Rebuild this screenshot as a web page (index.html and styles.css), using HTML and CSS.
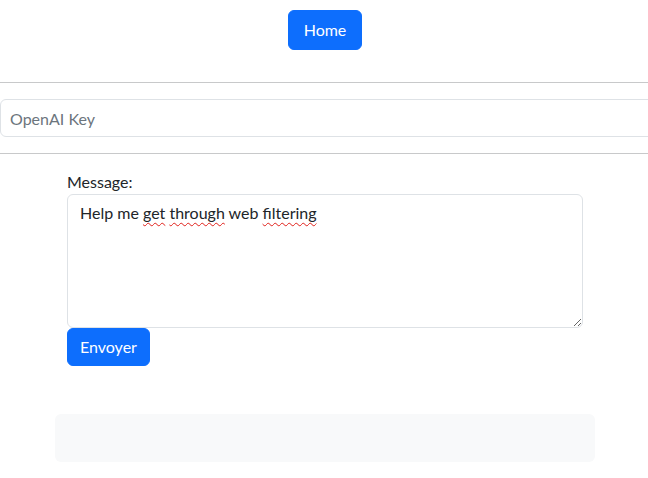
FILE: index.html
```html
<!DOCTYPE html>
<html lang="fr">
<head>
<meta charset="utf-8">
<title>Chat</title>
<link rel="stylesheet" href="styles.css">
</head>
<body>
<div class="page">
  <header class="topnav">
    <a class="btn btn-home" href="#">Home</a>
  </header>
  <hr class="rule">
  <input class="key-input" type="text" placeholder="OpenAI Key">
  <hr class="rule">
  <main class="container">
    <form class="chat-form">
      <label class="field-label" for="msg">Message:</label>
      <div id="msg" class="message-box" role="textbox" aria-multiline="true" contenteditable="true">Help me <span class="misspelled">get</span> <span class="misspelled">through</span> web <span class="misspelled">filtering</span></div>
      <button class="btn btn-send" type="button">Envoyer</button>
    </form>
  </main>
  <section class="container response-box"></section>
</div>
</body>
</html>
```
FILE: styles.css
```css
html, body {
  margin: 0;
  padding: 0;
  background: #fff;
  overflow-x: hidden;
}

body {
  font-family: "Lato", "Roboto", "Liberation Sans", sans-serif;
  font-size: 16px;
  line-height: 24px;
  color: #212529;
}

.page {
  width: 650px;
  overflow: hidden;
}

.topnav {
  display: flex;
  justify-content: center;
  padding: 10px 0 16px;
}

.btn {
  display: inline-block;
  font: inherit;
  color: #fff;
  background: #0d6efd;
  border: 1px solid #0d6efd;
  border-radius: 6px;
  text-decoration: none;
  cursor: pointer;
}

.btn-home {
  padding: 7px 15px;
}

.btn-send {
  padding: 6px 12px;
}

.rule {
  margin: 16px 0;
  border: 0;
  border-top: 1px solid #c8c9ca;
}

.key-input {
  display: block;
  box-sizing: border-box;
  width: 700px;
  height: 38px;
  margin: 0;
  padding: 6px 9px;
  font: inherit;
  color: #212529;
  background: #fff;
  border: 1px solid #dee2e6;
  border-radius: 6px;
  outline: none;
}

.key-input::placeholder {
  color: #6c757d;
  opacity: 1;
}

.container {
  box-sizing: border-box;
  width: 540px;
  margin: 0 auto;
  padding: 0 12px;
}

.chat-form {
  display: flex;
  flex-direction: column;
  align-items: flex-start;
}

.field-label {
  display: block;
}

.message-box {
  box-sizing: border-box;
  align-self: stretch;
  height: 134px;
  padding: 6px 12px;
  border: 1px solid #dee2e6;
  border-radius: 6px;
  overflow: auto;
  resize: vertical;
  outline: none;
  white-space: pre-wrap;
}

.misspelled {
  text-decoration: underline wavy #e0201a;
  text-decoration-thickness: 1px;
  text-underline-offset: 3px;
}

.response-box {
  height: 48px;
  margin-top: 48px;
  background: #f8f9fa;
  border-radius: 6px;
}
```
